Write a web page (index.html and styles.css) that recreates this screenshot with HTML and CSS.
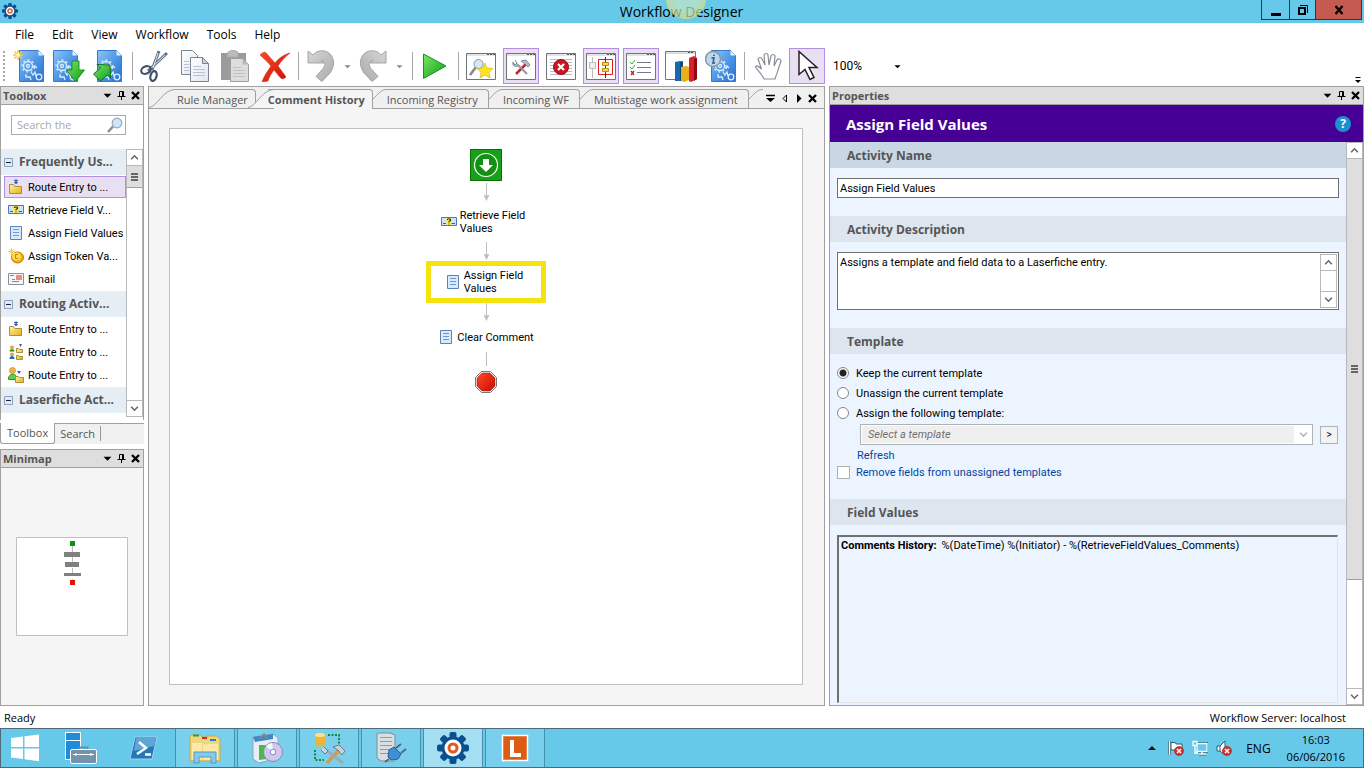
FILE: index.html
```html
<!DOCTYPE html>
<html lang="en">
<head>
<meta charset="utf-8">
<title>Workflow Designer</title>
<link rel="stylesheet" href="styles.css">
</head>
<body>
<svg class="defs" width="0" height="0" aria-hidden="true">
  <defs>
    <linearGradient id="blue" x1="0" y1="0" x2="1" y2="1"><stop offset="0" stop-color="#8ec5f6"/><stop offset=".5" stop-color="#4f98e6"/><stop offset="1" stop-color="#2a6fd0"/></linearGradient>
    <linearGradient id="green" x1="0" y1="0" x2="1" y2="1"><stop offset="0" stop-color="#7be860"/><stop offset="1" stop-color="#0c9a1c"/></linearGradient>
    <linearGradient id="grey" x1="0" y1="0" x2="1" y2="1"><stop offset="0" stop-color="#d6d6d6"/><stop offset="1" stop-color="#aaa"/></linearGradient>
    <linearGradient id="red" x1="0" y1="0" x2="1" y2="1"><stop offset="0" stop-color="#ff4a2a"/><stop offset="1" stop-color="#c80c00"/></linearGradient>
    <linearGradient id="gold" x1="0" y1="0" x2="1" y2="1"><stop offset="0" stop-color="#fff3a0"/><stop offset="1" stop-color="#e0b020"/></linearGradient>
    <linearGradient id="paper" x1="0" y1="0" x2="1" y2="1"><stop offset="0" stop-color="#fff"/><stop offset="1" stop-color="#dfe6f0"/></linearGradient>
    <symbol id="gear" viewBox="0 0 32 32">
      <g fill="#0b4f8f"><circle cx="16" cy="16" r="11.5"/><g id="teeth"><rect x="12.5" y="0" width="7" height="32" rx="2"/><rect x="0" y="12.5" width="32" height="7" rx="2"/></g><use href="#teeth" transform="rotate(45 16 16)"/></g>
      <circle cx="16" cy="16" r="8.5" fill="#fff"/><circle cx="16" cy="16" r="5.5" fill="#e05a1c"/><circle cx="16" cy="16" r="2.5" fill="#fff"/>
    </symbol>
    <symbol id="doc" viewBox="0 0 32 32">
      <path d="M6.500 .5h19l5 5v26h-24z" fill="url(#blue)" stroke="#3579d0"/><path d="M25.500 .5v5h5z" fill="#e4f2ff"/>
      <g fill="none" stroke="#dcecff" stroke-width="1.300"><circle cx="15" cy="16" r="4.500"/><circle cx="15" cy="16" r="1.500"/><circle cx="15" cy="16" r="6" stroke-dasharray="2 2.500"/><circle cx="26" cy="27" r="2.800"/><path d="M18 22l2 3 2-3 1 4 M21 19l1-3 2 2 M13 24v3h4l1 3"/></g>
    </symbol>
    <symbol id="new" viewBox="0 0 32 32"><use href="#doc"/><path d="M5 0v10M0 5h10M1.500 1.500l7 7M8.500 1.500l-7 7" stroke="#f4c64a" stroke-width="1.600"/><circle cx="5" cy="5" r="2" fill="#fff6c0"/></symbol>
    <symbol id="down" viewBox="0 0 32 32"><g transform="translate(-6)"><use href="#doc" width="32" height="32"/></g><path d="M19 11h7v9h5.500l-9 11.500-9-11.500H19z" fill="url(#green)" stroke="#22902a"/></symbol>
    <symbol id="publish" viewBox="0 0 32 32"><g transform="translate(-2)"><use href="#doc" width="32" height="32"/></g><path d="M17 15l-13-.5 3.500 3.500-7 6 7 7 7-6 3 3z" fill="url(#green)" stroke="#0b6f1b"/></symbol>
    <symbol id="cut" viewBox="0 0 32 32"><path d="M20 1l-7 19M28 3L9 21" stroke="#667789" stroke-width="3"/><path d="M19 3l-5 15M26 5L12 18" stroke="#dfe5ea" stroke-width="1"/><g fill="none" stroke="#40526a" stroke-width="2.200"><ellipse cx="7" cy="20" rx="5" ry="3.500" transform="rotate(-25 7 20)"/><ellipse cx="14.500" cy="26" rx="3" ry="5" transform="rotate(15 14.500 26)"/></g></symbol>
    <symbol id="copy" viewBox="0 0 32 32"><g stroke="#7d8490" fill="url(#paper)"><path d="M2.500 .5h11l5 5v19h-16z"/><path d="M11.500 7.500h12l6 6v18h-18z"/><path d="M23.500 7.500v6h6z" fill="#ccd2dc"/></g><path d="M5 11.500h5M5 14.500h5M5 17.500h5M5 20.500h5M14 16.500h8M14 19.500h12M14 22.500h12M14 25.500h12" stroke="#b4c3da"/></symbol>
    <symbol id="paste" viewBox="0 0 32 32"><path d="M2 3h25v27H2z" fill="#9b9b9b"/><path d="M9 2l5-2 5 2v5H8z" fill="#bbb" stroke="#aaa"/><path d="M11.500 8.500h12l6 6v17h-18z" fill="#ddd" stroke="#9c9c9c"/><path d="M23.500 8.500v6h6z" fill="#bbb"/><path d="M14 17.500h8M14 20.500h12M14 23.500h12M14 26.500h12" stroke="#c0c0c0"/></symbol>
    <symbol id="delete" viewBox="0 0 32 32"><path d="M1 5c3-3 5-4 7-1l8 9c4-5 8-8 15-10-5 4-9 8-12 13 3 4 6 8 8 11-3 3-5 2-7-1l-5-6c-3 4-5 7-6 11l-6 1c2-6 5-10 9-16C8 11 4 8 1 5z" fill="url(#red)" stroke="#d5331c" stroke-width=".6"/></symbol>
    <symbol id="undo" viewBox="0 0 32 32"><path d="M3 1l5 4C12 0 19-.5 24 3c6 5 6 13 1 20l-8 8.500-6-5 7-8c3-4 2-7-2-8.500l3 3H3z" fill="url(#grey)" stroke="#a5a5a5"/></symbol>
    <symbol id="redo" viewBox="0 0 32 32"><g transform="translate(32) scale(-1 1)"><use href="#undo" width="32" height="32"/></g></symbol>
    <symbol id="play" viewBox="0 0 32 32"><path d="M4.500 4v24.500L27 16z" fill="url(#green)" stroke="#129322"/></symbol>
    <symbol id="win" viewBox="0 0 32 32"><path d="M1.500 3.500h29v26h-29z" fill="#fff" stroke="#6f747c"/><path d="M2 4h28v2H2z" fill="#e2e4e8"/><path d="M22 4.500h2m1 0h2m1 0h2" stroke="#555"/></symbol>
    <symbol id="find" viewBox="0 0 32 32"><use href="#win"/><path d="M11 17l-6 8" stroke="#888" stroke-width="2.500"/><circle cx="13.500" cy="14" r="4.500" fill="#d5e9fa" stroke="#8898a8"/><path d="M20 13l2 5 6 .5-4 4 1 5.500-5-3-5 3 1-5.500-4-4 6-.5z" fill="#ffe31e" stroke="#d4b42a" stroke-width=".7"/></symbol>
    <symbol id="hammer" viewBox="0 0 32 32"><path d="M21 14L11 24" stroke="#b52736" stroke-width="2.500"/><path d="M12 14l10 10" stroke="#9f8f9a" stroke-width="2"/><path d="M16 11l5-1 4 5-2 2-3-3zM10 10l2 3-2 2-2-3c-1 4 2 5 5 4" fill="#b3c2d2" stroke="#65788c" stroke-width=".8"/></symbol>
    <symbol id="tools" viewBox="0 0 32 32"><use href="#win"/><use href="#hammer"/></symbol>
    <symbol id="error" viewBox="0 0 32 32"><use href="#win"/><path d="M5 9.500h22M5 12.500h22M5 15.500h22M5 18.500h22M5 21.500h22M5 24.500h22" stroke="#b8bcc2"/><circle cx="16" cy="17" r="7.500" fill="#c91523" stroke="#a00b18"/><path d="M13 14l6 6m0-6l-6 6" stroke="#fff" stroke-width="2.200"/></symbol>
    <symbol id="flow" viewBox="0 0 32 32"><use href="#win"/><path d="M7.500 7v5M7.500 18v10" stroke="#bbb"/><path d="M4.500 12.500h6v6h-6z" fill="#eee" stroke="#bbb"/><path d="M13.500 9.500h14v15h-14z" fill="#fff" stroke="#df1d20"/><path d="M20.500 7v21" stroke="#334"/><path d="M17.500 12.500h6v3h-6zM17.500 18.500h6v3h-6z" fill="#ffd33a" stroke="#c08a10"/></symbol>
    <symbol id="list" viewBox="0 0 32 32"><use href="#win"/><path d="M12 12.500h14M12 17.500h14M12 22.500h14" stroke="#75788a"/><path d="M5 12l2 2 3-4M5 17l2 2 3-4" fill="none" stroke="#23b13a"/><path d="M6 21l3 4m0-4l-3 4" stroke="#c61e28" stroke-width="1.300"/></symbol>
    <symbol id="chart" viewBox="0 0 32 32"><path d="M.5 1.500h30v28H.5z" fill="#fff" stroke="#777"/><path d="M1 2h29v2H1z" fill="#ddd"/><path d="M23 2.500h2m1 0h2" stroke="#555"/><path d="M10 12l5-1 3 1v19h-8z" fill="#176bab"/><path d="M15 12l3-1v19l-3 1z" fill="#0c4778"/><path d="M16 17l5-1 3 1v13l-5 2-3-1z" fill="#e8b11a"/><path d="M24 8l5-2 3 2v21l-6 3-2-1z" fill="#de1e26"/><path d="M29 9l3-1v21l-3 2z" fill="#8c0b12"/></symbol>
    <symbol id="info" viewBox="0 0 32 32"><use href="#doc"/><circle cx="8" cy="9" r="7.500" fill="#bcd8ef" stroke="#8899a8" stroke-width="1.500"/><path d="M9 4.500v1.500M6.500 8H9l-1 5h2" stroke="#496b8a" stroke-width="1.800" fill="none"/></symbol>
    <symbol id="hand" viewBox="0 0 32 32"><path d="M13 29C11 24 6 20 4.500 17c1-2 3-1 6 2L7 9c1-2 3-2 4 0l3 6-1-10c1-2 4-2 4 0l1 10 2-9c1-2 3-2 4 0l-1 10 3-6c1-2 4-1 4 1l-3 9c-1 5-3 7-3 9z" fill="#fff" stroke="#888e96" stroke-width="1.200"/></symbol>
    <symbol id="cursor" viewBox="0 0 32 32"><path d="M8 1.500v23l6-5 5 10 4-2-5-10h8z" fill="#fff" stroke="#222" stroke-width="1.500"/></symbol>
    <symbol id="caret" viewBox="0 0 8 8"><path d="M.5 2.500h7L4 6z"/></symbol>
    <symbol id="pin" viewBox="0 0 9 9"><path d="M2.500 .5h4v5h-4zM5.500 .5v5M.500 5.500h8M4.500 5.500V9" fill="none" stroke="#000"/></symbol>
    <symbol id="x" viewBox="0 0 9 9"><path d="M1 1l7 7m0-7L1 8" stroke="#000" stroke-width="2.300"/></symbol>
    <symbol id="up" viewBox="0 0 8 8"><path d="M1 5.500l3-3 3 3" fill="none" stroke="#666" stroke-width="1.400"/></symbol>
    <symbol id="dn" viewBox="0 0 8 8"><path d="M1 2.500l3 3 3-3" fill="none" stroke="#666" stroke-width="1.400"/></symbol>
    <symbol id="minus" viewBox="0 0 9 9"><path d="M.5 .5h8v8h-8z" fill="#dfeafa" stroke="#8fa2bd"/><path d="M2 4.500h5" stroke="#223"/></symbol>
    <symbol id="lens" viewBox="0 0 16 16"><path d="M6 9.500L1 15" stroke="#8d8d8d" stroke-width="2.500"/><circle cx="10" cy="6" r="4.800" fill="#cfe6fa" stroke="#9aa9b8" stroke-width="1.200"/></symbol>
    <symbol id="folder" viewBox="0 0 16 16"><path d="M1.500 5.500h4l1.500 2h6.500v7h-12z" fill="url(#gold)" stroke="#b08e35"/><path d="M8 0v3M6 1.500h4M6.500 3h3L8 5z" fill="#3159b7" stroke="#3159b7" stroke-width=".9"/></symbol>
    <symbol id="query" viewBox="0 0 16 16"><path d="M.5 3.500h15v8H.5z" fill="#cfe2fa" stroke="#5078b8"/><path d="M2 9.500h3M10 9.500h4" stroke="#3b629a"/><path d="M5.500 4h5v7h-5z" fill="#ffed4a"/><path d="M6.500 6V5h3v2H8v1.500M8 9.500v1" fill="none" stroke="#222"/></symbol>
    <symbol id="form" viewBox="0 0 16 16"><path d="M2.500 1.500h11v13h-11z" fill="#d9eafe" stroke="#5d82b8"/><path d="M5 4.500h6M5 7.500h6M5 10.500h6" stroke="#6c97d0"/></symbol>
    <symbol id="token" viewBox="0 0 16 16"><ellipse cx="9.500" cy="9.500" rx="6" ry="5.500" fill="#edaf18" stroke="#b7790a"/><ellipse cx="8.500" cy="8.500" rx="4.500" ry="4" fill="#ffd84d"/><path d="M10 6.500H7.500v4H10" fill="none" stroke="#c68a0a"/><path d="M3.500 0v7M0 3.500h7M1 1l5 5m0-5L1 6" stroke="#f3cf63"/></symbol>
    <symbol id="mail" viewBox="0 0 16 16"><path d="M.5 2.500h15v11H.5z" fill="#f5f6f8" stroke="#88909c"/><path d="M8 4h6v5H8z" fill="#ee8a84"/><path d="M2 4.500h4M4 8.500h3M4 10.500h7" stroke="#788ca8"/></symbol>
    <symbol id="people" viewBox="0 0 16 16"><circle cx="4" cy="3.500" r="2" fill="#e7a33a"/><path d="M1.500 7.500c0-3 5-3 5 0z" fill="#189429"/><circle cx="4" cy="10.500" r="2" fill="#e7a33a"/><path d="M1.500 15c0-4 5-4 5 0z" fill="#2367c4"/><path d="M8.500 4.500h2l1 1h3v3h-6zM8.500 11.500h2l1 1h3v3h-6z" fill="url(#gold)" stroke="#b08e35"/><path d="M11 0h3l-1.500 3z" fill="#3159b7"/></symbol>
    <symbol id="person" viewBox="0 0 16 16"><circle cx="4.500" cy="3.500" r="3" fill="#f0b04a" stroke="#bb7c22" stroke-width=".6"/><path d="M.5 12.500c-1-6 8-8 9 0z" fill="#5fd04c" stroke="#29922a"/><path d="M7.500 9.500h3l1 1h4v5h-8z" fill="url(#gold)" stroke="#b08e35"/><path d="M9 4h4l-2 3z" fill="#3159b7"/></symbol>
    <symbol id="start" viewBox="0 0 32 32"><path d="M0 0h32v32H0z" fill="#18a018"/><path d="M.5 .5h31v31H.5z" fill="none" stroke="#087008"/><circle cx="16" cy="16" r="11.500" fill="#119011" stroke="#fff" stroke-width="1.200"/><path d="M13 10h6v6h4l-7 7-7-7h4z" fill="#fff"/></symbol>
    <symbol id="stop" viewBox="0 0 24 24"><path d="M7.500 1.500h9l6 6v9l-6 6h-9l-6-6v-9z" fill="#fff" stroke="#777"/><path d="M8 3h8l5 5v8l-5 5H8l-5-5V8z" fill="url(#red)" stroke="#a30c00" stroke-width=".5"/></symbol>
    <symbol id="arrow" viewBox="0 0 7 20"><path d="M3.500 0v14" stroke="#bdbdbd"/><path d="M.5 13h6l-3 6z" fill="#bdbdbd"/></symbol>
    <symbol id="badge" viewBox="0 0 10 10"><circle cx="5" cy="5" r="4.500" fill="#d8322c" stroke="#a31713" stroke-width=".6"/><path d="M3 3l4 4m0-4L3 7" stroke="#fff" stroke-width="1.500"/></symbol>
  </defs>
</svg>

<header class="titlebar">
  <svg class="app-icon"><use href="#gear"/></svg>
  <span class="app-title">Workflow Designer<i class="glow"></i></span>
  <div class="win-buttons">
    <button class="win-btn" aria-label="Minimize"><svg viewBox="0 0 12 12"><path d="M1 10.500h10" stroke="#000" stroke-width="3"/></svg></button>
    <button class="win-btn" aria-label="Restore"><svg viewBox="0 0 12 12"><path d="M2 4h6v6H2z" fill="none" stroke="#000" stroke-width="2"/><path d="M3 1.500h7.500V9" fill="none" stroke="#000"/></svg></button>
    <button class="win-btn win-close" aria-label="Close"><svg viewBox="0 0 12 12"><path d="M2.500 2l7 8m0-8l-7 8" stroke="#000" stroke-width="2.300"/></svg></button>
  </div>
</header>

<nav class="menubar">
  <button>File</button><button>Edit</button><button>View</button><button>Workflow</button><button>Tools</button><button>Help</button>
</nav>

<div class="toolbar" role="toolbar">
  <span class="grip"></span>
  <button class="tool" aria-label="New"><svg><use href="#new"/></svg></button>
  <button class="tool" aria-label="Save"><svg><use href="#down"/></svg></button>
  <button class="tool" aria-label="Publish"><svg><use href="#publish"/></svg></button>
  <span class="sep"></span>
  <button class="tool" aria-label="Cut"><svg><use href="#cut"/></svg></button>
  <button class="tool" aria-label="Copy"><svg><use href="#copy"/></svg></button>
  <button class="tool" aria-label="Paste"><svg><use href="#paste"/></svg></button>
  <button class="tool" aria-label="Delete"><svg><use href="#delete"/></svg></button>
  <span class="sep"></span>
  <button class="tool" aria-label="Undo"><svg><use href="#undo"/></svg></button>
  <button class="drop" aria-label="Undo history"><svg><use href="#caret"/></svg></button>
  <button class="tool" aria-label="Redo"><svg><use href="#redo"/></svg></button>
  <button class="drop" aria-label="Redo history"><svg><use href="#caret"/></svg></button>
  <span class="sep"></span>
  <button class="tool" aria-label="Run"><svg><use href="#play"/></svg></button>
  <span class="sep"></span>
  <button class="tool" aria-label="Search pane"><svg><use href="#find"/></svg></button>
  <button class="tool on" aria-label="Toolbox pane"><svg><use href="#tools"/></svg></button>
  <button class="tool" aria-label="Errors pane"><svg><use href="#error"/></svg></button>
  <button class="tool on" aria-label="Minimap pane"><svg><use href="#flow"/></svg></button>
  <button class="tool on" aria-label="Properties pane"><svg><use href="#list"/></svg></button>
  <button class="tool" aria-label="Statistics"><svg><use href="#chart"/></svg></button>
  <button class="tool" aria-label="Workflow information"><svg><use href="#info"/></svg></button>
  <span class="sep"></span>
  <button class="tool" aria-label="Pan"><svg><use href="#hand"/></svg></button>
  <button class="tool on" aria-label="Select"><svg><use href="#cursor"/></svg></button>
  <label class="zoom"><select aria-label="Zoom"><option>100%</option></select><svg><use href="#caret"/></svg></label>
  <button class="overflow" aria-label="More buttons"><svg viewBox="0 0 6 8"><path d="M.5 1.500h5" stroke="#000"/><path d="M0 4h6L3 7z"/></svg></button>
</div>

<main class="workspace">
  <aside class="left">
    <section class="pane toolbox">
      <h2 class="pane-head"><span>Toolbox</span><svg><use href="#caret"/></svg><svg><use href="#pin"/></svg><svg><use href="#x"/></svg></h2>
      <label class="search"><input type="text" placeholder="Search the" aria-label="Search the toolbox"><svg><use href="#lens"/></svg></label>
      <div class="scroller">
        <div class="list">
          <h3 class="cat"><svg><use href="#minus"/></svg>Frequently Us...</h3>
          <button class="item on"><svg><use href="#folder"/></svg>Route Entry to ...</button>
          <button class="item"><svg><use href="#query"/></svg>Retrieve Field V...</button>
          <button class="item"><svg><use href="#form"/></svg>Assign Field Values</button>
          <button class="item"><svg><use href="#token"/></svg>Assign Token Va...</button>
          <button class="item"><svg><use href="#mail"/></svg>Email</button>
          <h3 class="cat"><svg><use href="#minus"/></svg>Routing Activ...</h3>
          <button class="item"><svg><use href="#folder"/></svg>Route Entry to ...</button>
          <button class="item"><svg><use href="#people"/></svg>Route Entry to ...</button>
          <button class="item"><svg><use href="#person"/></svg>Route Entry to ...</button>
          <h3 class="cat"><svg><use href="#minus"/></svg>Laserfiche Act...</h3>
        </div>
        <div class="bar"><button aria-label="Scroll up"><svg><use href="#up"/></svg></button><span class="thumb short"><i></i></span><button class="last" aria-label="Scroll down"><svg><use href="#dn"/></svg></button></div>
      </div>
    </section>
    <div class="side-tabs"><button class="on">Toolbox</button><button>Search</button></div>
    <section class="pane minimap">
      <h2 class="pane-head"><span>Minimap</span><svg><use href="#caret"/></svg><svg><use href="#pin"/></svg><svg><use href="#x"/></svg></h2>
      <div class="map">
        <svg viewBox="0 0 112 99"><path d="M.5 .5h111v98H.5z" fill="#fff" stroke="#c0c0c0"/><path d="M56.500 9v35" stroke="#bbb" stroke-dasharray="6 5"/><path d="M54 4h5v5h-5z" fill="#0a9410"/><path d="M48 15h16v5H48zM49 25h14v5H49zM48 36h17v3H48z" fill="#808080"/><path d="M54 43h5v5h-5z" fill="#e01400"/></svg>
      </div>
    </section>
  </aside>

  <section class="designer">
    <div class="tabs" role="tablist">
      <button class="tab wide" role="tab"><svg viewBox="0 0 26 19"><path d="M0 18.500C8 18 14 .5 26 .5"/></svg><span>Rule Manager</span></button>
      <button class="tab wide on" role="tab"><svg viewBox="0 0 26 19"><path class="fill" d="M0 19C8 18 14 .5 26 .5V19z"/><path d="M0 18.500C8 18 14 .5 26 .5"/></svg><span>Comment History</span></button>
      <button class="tab" role="tab"><svg viewBox="0 0 14 19"><path d="M0 10C5 6 7 .5 14 .5"/></svg><span>Incoming Registry</span></button>
      <button class="tab" role="tab"><svg viewBox="0 0 14 19"><path d="M0 10C5 6 7 .5 14 .5"/></svg><span>Incoming WF</span></button>
      <button class="tab" role="tab"><svg viewBox="0 0 14 19"><path d="M0 10C5 6 7 .5 14 .5"/></svg><span>Multistage work assignment</span></button>
      <svg class="tab-more" viewBox="0 0 14 19"><path d="M0 10C5 6 7 .5 14 .5"/></svg>
      <div class="tab-tools">
        <svg viewBox="0 0 9 9"><path d="M0 1.500h9" stroke="#000" stroke-width="1.500"/><path d="M0 4h9L4.500 8z"/></svg>
        <svg viewBox="0 0 9 9"><path d="M6.500 1v7L3 4.500z" fill="none" stroke="#000"/></svg>
        <svg viewBox="0 0 9 9"><path d="M3 0v9l4.500-4.500z"/></svg>
        <svg viewBox="0 0 9 9"><use href="#x"/></svg>
      </div>
    </div>
    <div class="canvas">
      <div class="sheet">
        <svg class="node-start"><use href="#start"/></svg>
        <svg class="link"><use href="#arrow"/></svg>
        <div class="node"><svg><use href="#query"/></svg><span>Retrieve Field<br>Values</span></div>
        <svg class="link"><use href="#arrow"/></svg>
        <div class="node on"><svg><use href="#form"/></svg><span>Assign Field<br>Values</span></div>
        <svg class="link"><use href="#arrow"/></svg>
        <div class="node one"><svg><use href="#form"/></svg><span>Clear Comment</span></div>
        <span class="stem"></span>
        <svg class="node-stop"><use href="#stop"/></svg>
      </div>
    </div>
  </section>

  <section class="pane props">
    <h2 class="pane-head"><span>Properties</span><svg><use href="#caret"/></svg><svg><use href="#pin"/></svg><svg><use href="#x"/></svg></h2>
    <div class="banner"><h1>Assign Field Values</h1><button aria-label="Help">?</button></div>
    <div class="scroller">
      <form class="form">
        <h3 class="first"><label for="name">Activity Name</label></h3>
        <div class="block"><input id="name" class="text" type="text" value="Assign Field Values"></div>
        <h3><label for="desc">Activity Description</label></h3>
        <div class="block desc">
          <textarea id="desc">Assigns a template and field data to a Laserfiche entry.</textarea>
          <div class="bar"><button type="button" aria-label="Scroll up"><svg><use href="#up"/></svg></button><button type="button" class="last" aria-label="Scroll down"><svg><use href="#dn"/></svg></button></div>
        </div>
        <h3>Template</h3>
        <div class="block template">
          <label><input type="radio" name="t" checked>Keep the current template</label>
          <label><input type="radio" name="t">Unassign the current template</label>
          <label><input type="radio" name="t">Assign the following template:</label>
          <div class="pick">
            <div class="combo"><select aria-label="Template" disabled><option>Select a template</option></select><svg><use href="#dn"/></svg></div>
            <button type="button" aria-label="Browse">&gt;</button>
          </div>
          <a href="#refresh">Refresh</a>
          <label class="check"><input type="checkbox">Remove fields from unassigned templates</label>
        </div>
        <h3>Field Values</h3>
        <div class="values"><b>Comments History:</b><span>%(DateTime) %(Initiator) - %(RetrieveFieldValues_Comments)</span></div>
      </form>
      <div class="bar"><button aria-label="Scroll up"><svg><use href="#up"/></svg></button><span class="thumb tall"><i></i></span><button class="last" aria-label="Scroll down"><svg><use href="#dn"/></svg></button></div>
    </div>
  </section>
</main>

<footer class="status"><span>Ready</span><span>Workflow Server: localhost</span></footer>

<nav class="taskbar">
  <button class="task plain win" aria-label="Start"><svg viewBox="0 0 32 32"><path d="M2 6l12-1.500V15H2zM15.500 4.300L30 2.500V15H15.500zM2 16.500h12V27L2 25.500zM15.500 16.500H30v12.800l-14.500-2z" fill="#fff"/></svg></button>
  <button class="task plain" aria-label="Server Manager"><svg viewBox="0 0 32 32"><path d="M.5 .5h15v27H.5z" fill="#1e8bdc" stroke="#fff"/><path d="M0 8.500h16" stroke="#fff"/><path d="M14.500 18v-2.500h8V18" fill="none" stroke="#6b8ea5" stroke-width="2"/><rect x="5.500" y="17.500" width="26" height="14" rx="1.500" fill="#7293aa" stroke="#fff"/><path d="M8 22.500h21M11 21v3M26 21v3" stroke="#fff"/></svg></button>
  <button class="task plain" aria-label="PowerShell"><svg viewBox="0 0 32 32"><path d="M8 5h22l-5 22H3z" fill="#2777b8" stroke="#9fd1ef"/><path d="M9 6h20l-2 8-20 5z" fill="#5fa5d8"/><path d="M12 10l7 6-9 6M18 22.500h6" fill="none" stroke="#fff" stroke-width="2.500"/></svg></button>
  <button class="task" aria-label="File Explorer"><svg viewBox="0 0 32 32"><path d="M1 5l2-2h8l2 2h4l2-1h9l3 3v22H1z" fill="#f1d77c" stroke="#c9a74a"/><path d="M4 3.500h6" stroke="#2d9d42" stroke-width="2"/><path d="M13 6h5" stroke="#d52b1e" stroke-width="2"/><path d="M21 8h6" stroke="#2d7ed0" stroke-width="2"/><path d="M3 11h10v17H3zM14 12h15v16H14z" fill="#fae9a8"/><path d="M5 31V20h22v11h-5v-6H10v6z" fill="#88c8ea" stroke="#4c9ccc"/></svg></button>
  <button class="task" aria-label="Installer"><svg viewBox="0 0 32 32"><path d="M2 5l20-3 5 4v20L8 31l-6-4z" fill="#e8eef5" stroke="#8aa2c0"/><path d="M2 5l20-3v5L4 10z" fill="#3d87cf"/><path d="M8 13h8v14l-8 1z" fill="#4fb84a"/><path d="M8 7l5-5 3 5" fill="none" stroke="#888" stroke-width="1.500"/><circle cx="22" cy="20" r="9.500" fill="#cfc8ee" stroke="#8b86b5"/><path d="M22 20L15 14a9 9 0 0 1 6-3z" fill="#f6fdff"/><circle cx="22" cy="20" r="2.800" fill="#fff" stroke="#8b86b5"/></svg></button>
  <button class="task" aria-label="Configuration"><svg viewBox="0 0 32 32"><path d="M2 3v10c2 2 8 2 10 0V3z" fill="#eab53a"/><ellipse cx="7" cy="3" rx="5" ry="2" fill="#ffe08a"/><path d="M15 3h11v9M2 18v10h9" fill="none" stroke="#178a2c" stroke-width="2" stroke-dasharray="2 1.500"/><path d="M28 16L14 31" stroke="#d69a44" stroke-width="3.500"/><path d="M13 18l17 13" stroke="#9eaab5" stroke-width="3"/><path d="M20 15l6-2 6 6-3 4-4-5zM11 15l4 4-3 3-4-4" fill="#cbd4dc" stroke="#6d7b86"/></svg></button>
  <button class="task" aria-label="Server connection"><svg viewBox="0 0 32 32"><path d="M2 1h13l5 2v26H6l-4-3z" fill="#d8dee2" stroke="#7e8d98"/><path d="M5 5.500h12M5 9.500h12M5 13.500h12M5 17.500h10M5 21.500h8" stroke="#8f9ca6"/><path d="M14 18l5-3 7 7-3 5-7 1-3-3z" fill="#3f8fd4" stroke="#1e5fa0"/><path d="M21 16l5-4M26 21l5-4M14 27l-4 3" stroke="#53687a" stroke-width="2"/></svg></button>
  <button class="task on" aria-label="Workflow Designer"><svg><use href="#gear"/></svg></button>
  <button class="task" aria-label="Laserfiche"><svg viewBox="0 0 32 32"><path d="M3.500 3.500h25v25h-25z" fill="#de5c12" stroke="#fff" stroke-width="1.500"/><path d="M11 8h4v13h7v4H11z" fill="#fff"/></svg></button>
  <div class="tray">
    <svg viewBox="0 0 16 16"><path d="M4 10h8L8 6z" fill="#111"/></svg>
    <svg viewBox="0 0 16 16"><path d="M1.500 1v14" stroke="#2b5c75" stroke-width="3"/><path d="M3 2.500h4l1 1.500h6v7H8L7 10H3z" fill="#fff" stroke="#2b5c75"/><path d="M1.500 1v14" stroke="#fff" stroke-width="1.500"/><use href="#badge" x="6" y="6" width="10" height="10"/></svg>
    <svg viewBox="0 0 16 16"><path d="M5 3.500h10v8H5zM7 14h7M10 12v2" fill="none" stroke="#2b5c75" stroke-width="3"/><path d="M5 3.500h10v8H5zM7 14h7M10 12v2M3 5v8h3M1 1.500h4v4H1z" fill="#66c9ea" stroke="#fff" stroke-width="1.300"/></svg>
    <svg viewBox="0 0 16 16"><path d="M1 6h3l5-5v14L4 11H1z" fill="#fff" stroke="#2b5c75"/><path d="M4 6v5" stroke="#2b5c75"/><use href="#badge" x="6" y="6" width="10" height="10"/></svg>
    <span class="lang">ENG</span>
    <time class="clock">16:03<br>06/06/2016</time>
  </div>
</nav>
</body>
</html>
```
FILE: styles.css
```css
* { box-sizing: border-box; }
body {
  margin: 0;
  height: 100vh;
  display: flex;
  flex-direction: column;
  overflow: hidden;
  background: #fff;
  color: #000;
  font: 11px/13px Roboto, "Liberation Sans", sans-serif;
}
button { margin: 0; padding: 0; border: 0; background: none; color: inherit; font: inherit; }
input, select, textarea { margin: 0; font: inherit; color: inherit; border-radius: 0; }
h1, h2, h3 { margin: 0; }
svg { display: block; flex: none; }
.defs { position: absolute; }

/* Title bar and menu */
.titlebar { display: flex; align-items: flex-start; height: 23px; flex: none; background: #66c9ea; }
.app-icon { width: 16px; height: 16px; margin: 3px 0 0 2px; }
.app-title { position: relative; flex: 1; padding-left: 84px; text-align: center; font: 14px/23px "Open Sans", sans-serif; }
.glow { position: absolute; left: 50%; top: -21px; width: 40px; height: 40px; margin-left: 26px; border-radius: 50%; background: radial-gradient(#c4e8c4 35%, #d8e08c 68%, #d8c84a); opacity: .7; }
.win-buttons { display: flex; margin-right: 2px; height: 20px; border: 1px solid #233d48; border-top: 0; }
.win-btn { display: flex; align-items: center; justify-content: center; width: 27px; }
.win-btn + .win-btn { border-left: 1px solid #233d48; width: 26px; }
.win-btn.win-close { width: 46px; background: #c45a50; }
.win-btn svg { width: 12px; height: 12px; }
.menubar { display: flex; flex: none; height: 24px; padding-left: 15px; gap: 18px; font: 12px/24px "Open Sans", sans-serif; }

/* Toolbar */
.toolbar { display: flex; flex: none; gap: 4px; height: 39px; padding: 1px 3px 2px; }
.grip { width: 4px; margin: 3px 0; border-left: 2px dotted #a8a8a8; }
.tool { display: flex; align-items: center; justify-content: center; width: 36px; height: 36px; border: 1px solid transparent; }
.tool.on { border-color: #b48ee2; background: #e8e0f2; }
.tool svg { width: 32px; height: 32px; }
.sep { width: 2px; margin: 4px 0; border-right: 1px solid #a8a8a8; }
.drop { width: 8px; fill: #8a8a8a; }
.drop + .sep { margin-left: 4px; }
.drop svg, .zoom svg { width: 7px; height: 7px; margin: auto; }
.zoom { display: flex; align-items: center; width: 68px; margin-left: 4px; }
.zoom select { flex: 1; min-width: 0; appearance: none; border: 0; padding: 0; background: none; font: 12px/16px Roboto, "Liberation Sans", sans-serif; }
.zoom svg { margin: 0; }
.overflow { margin-left: auto; align-self: flex-end; }
.overflow svg { width: 6px; height: 8px; }

/* Docked panes */
.workspace { flex: 1; min-height: 0; display: grid; grid-template-columns: 144px minmax(0, 1fr) minmax(0, 535px); gap: 4px; }
.pane { display: flex; flex-direction: column; min-height: 0; border: 1px solid #a0a0a0; }
.pane-head { display: flex; align-items: center; gap: 5px; flex: none; height: 18px; padding: 0 3px 0 2px; border-bottom: 1px solid #a0a0a0; background: #dedede; color: #555; font: bold 11px/16px "Open Sans", sans-serif; }
.pane-head span { flex: 1; }
.pane-head svg { width: 9px; height: 9px; }
.left { display: flex; flex-direction: column; min-height: 0; }
.toolbox { flex: 0 1 334px; border-bottom: 0; }
.search { display: flex; align-items: center; flex: none; height: 20px; margin: 10px 17px 14px 10px; padding-right: 2px; border: 1px solid #ababab; }
.search input { flex: 1; min-width: 0; border: 0; padding: 0 0 0 5px; outline: 0; font: 11px/16px "Open Sans", sans-serif; }
.search input::placeholder { color: #a8a8a8; }
.search svg { width: 16px; height: 16px; }
.scroller { display: flex; flex: 1; min-height: 0; }
.toolbox .scroller { flex: 0 1 268px; }
.list { flex: 1; min-width: 0; overflow: hidden; }
.cat { display: flex; align-items: center; gap: 6px; height: 26px; padding-left: 3px; background: #e5edf5; color: #555; font: bold 12px/26px "Open Sans", sans-serif; white-space: nowrap; }
.cat svg { width: 9px; height: 9px; }
.item { display: flex; align-items: center; gap: 4px; width: calc(100% - 3px); height: 22px; margin: 1px 0 0 3px; padding-left: 3px; border: 1px solid transparent; white-space: nowrap; }
.item.on { border-color: #b48ee2; background: #e8e0f2; }
.item svg { width: 16px; height: 16px; }
.item + .cat { margin-top: 1px; }

.bar { display: flex; flex-direction: column; flex: none; width: 17px; border: 1px solid #b8b8b8; background: #fff; }
.bar button { display: flex; align-items: center; justify-content: center; height: 16px; border-bottom: 1px solid #b8b8b8; }
.bar button.last { margin-top: auto; border-bottom: 0; border-top: 1px solid #b8b8b8; }
.bar svg { width: 9px; height: 9px; }
.thumb { display: flex; align-items: center; justify-content: center; border-bottom: 1px solid #a0a0a0; background: #dedede; }
.thumb i { width: 7px; height: 8px; background: repeating-linear-gradient(#666 0 2px, transparent 2px 3px); }
.thumb.short { height: 22px; }
.thumb.tall { flex: 0 0 75%; }

.side-tabs { display: flex; flex: none; height: 21px; margin: 3px 0 5px; border-top: 1px solid #a0a0a0; background: #f0f0f0; color: #555; font: 11px/20px "Open Sans", sans-serif; }
.side-tabs button { padding: 0 5px; }
.side-tabs button + button::after { content: ""; border-right: 1px solid #999; margin-left: 5px; }
.side-tabs .on { margin-top: -1px; padding: 0 6px; border: 1px solid #a0a0a0; border-top: 0; border-radius: 0 0 3px 3px; background: #fff; }
.minimap { flex: 1; background: #f5f5f5; }
.map { flex: 1; display: flex; align-items: center; justify-content: center; }
.map svg { width: 112px; height: 99px; }

/* Designer */
.designer { display: flex; flex-direction: column; min-width: 0; border: 1px solid #a0a0a0; background: #f5f5f5; }
.tabs { display: flex; align-items: flex-end; flex: none; height: 22px; border-bottom: 1px solid #a0a0a0; background: #f0f0f0; }
.tab { display: flex; flex: none; height: 19px; color: #555; font: 11px/19px "Open Sans", sans-serif; white-space: nowrap; }
.tab svg, .tab-more { width: 14px; height: 19px; fill: none; stroke: #a0a0a0; }
.tab.wide svg { width: 26px; }
.tab span { padding-right: 10px; border: 1px solid #a0a0a0; border-left: 0; border-bottom: 0; border-radius: 0 4px 0 0; }
.tab.wide span { padding: 0 7px 0 2px; }
.tab.on { height: 20px; margin: 0 0 -1px -8px; font-weight: bold; }
.tab.on .fill { fill: #f5f5f5; stroke: none; }
.tab.on span { margin-left: -6px; padding-left: 0; background: linear-gradient(90deg, transparent 6px, #f5f5f5 6px); border-image: none; }
.tab-tools { display: flex; gap: 5px; margin: 0 7px 5px auto; }
.tab-tools svg { width: 9px; height: 9px; }
.canvas { flex: 1; display: flex; min-height: 0; padding: 19px 21px 20px 20px; }
.sheet { flex: 1; display: flex; flex-direction: column; align-items: center; padding-top: 20px; border: 1px solid #c0c0c0; background: #fff; }
.node-start { width: 32px; height: 32px; margin-bottom: 2px; }
.link { width: 7px; height: 19px; }
.node { display: flex; align-items: center; gap: 3px; height: 40px; padding-right: 6px; }
.node svg { width: 16px; height: 16px; }
.node.on { width: 120px; height: 42px; justify-content: center; padding-right: 4px; border: 5px solid #f5e20f; }
.node.one { height: 30px; padding-right: 0; }
.stem { height: 14px; border-left: 1px solid #bdbdbd; }
.node-stop { width: 24px; height: 24px; margin-top: 4px; }

/* Properties */
.banner { display: flex; align-items: center; justify-content: space-between; flex: none; height: 37px; padding: 0 12px 0 16px; background: #460096; color: #fff; }
.banner h1 { font: bold 15px/20px "Open Sans", sans-serif; }
.banner button { width: 16px; height: 16px; border-radius: 50%; background: #1d8fd1; font: bold 12px/16px "Open Sans", sans-serif; }
.form { flex: 1; min-width: 0; display: flex; flex-direction: column; background: #ecf5ff; }
.form h3 { flex: none; height: 26px; padding-left: 17px; background: #dde5ef; color: #555; font: bold 12px/28px "Open Sans", sans-serif; }
.form h3.first { background: #c9d6e4; }
.block { margin: 10px 7px 18px; }
.text { display: block; width: 100%; height: 20px; padding: 0 2px; border: 1px solid #707070; background: #fff; }
.desc { display: flex; height: 58px; padding: 1px; border: 1px solid #707070; background: #fff; }
.desc textarea { flex: 1; min-width: 0; padding: 2px 1px; border: 0; outline: 0; resize: none; overflow: hidden; background: none; }
.template { display: flex; flex-direction: column; margin: 9px 7px 17px; }
.template label { display: flex; align-items: center; gap: 7px; height: 20px; }
.template input { appearance: none; flex: none; width: 12px; height: 12px; border: 1px solid #858585; border-radius: 50%; background: #fff; }
.template input:checked { background: radial-gradient(#222 0 3px, #fff 4px); }
.template .check input { width: 13px; height: 13px; border-radius: 0; border-color: #b0b0b0; }
.template .check, .template a { color: #0645a0; }
.template .check { gap: 6px; }
.template a { margin: 4px 0 0 20px; align-self: flex-start; text-decoration: none; }
.pick { display: flex; align-items: center; gap: 7px; height: 21px; margin: 1px 0 0 23px; }
.combo { display: flex; align-items: center; flex: 1; height: 21px; padding: 1px 4px 1px 1px; border: 1px solid #adb2b5; background: #fff; }
.combo select { appearance: none; flex: 1; align-self: stretch; margin-right: 5px; padding: 0 6px; border: 0; background: #efefef; color: #707070; font-style: italic; opacity: 1; }
.combo svg { width: 9px; height: 9px; opacity: .5; }
.pick button { width: 18px; height: 18px; margin-right: 1px; border: 1px solid #adb2b5; background: #f3f3f3; font-size: 10px; line-height: 14px; }
.values { display: flex; gap: 5px; flex: 1; margin: 10px 8px 2px 7px; padding: 2px; border: 1px solid #e3e3e3; border-top: 2px solid #707070; border-left: 2px solid #707070; }

/* Status and taskbar */
.status { display: flex; justify-content: space-between; flex: none; height: 22px; padding: 0 18px 0 4px; font: 11px/24px "Open Sans", sans-serif; }
.taskbar { display: flex; gap: 2px; flex: none; height: 40px; border: 1px solid #4d6a78; background: #66c9ea; }
.task { display: flex; align-items: center; justify-content: center; width: 60px; border: 1px solid #4691ad; border-width: 0 1px; background: #79d0ed; }
.task.on { background: #a3def2; }
.task svg { width: 32px; height: 32px; }
.task.plain { border: 0; background: none; }
.task.plain.win { width: 48px; }
.tray { display: flex; align-items: center; gap: 8px; margin-left: auto; padding-right: 18px; font: 12px/17px "Open Sans", sans-serif; }
.tray svg { width: 16px; height: 16px; }
.lang { margin: 0 8px 0 6px; }
.clock { text-align: center; font-size: 11px; }
```
